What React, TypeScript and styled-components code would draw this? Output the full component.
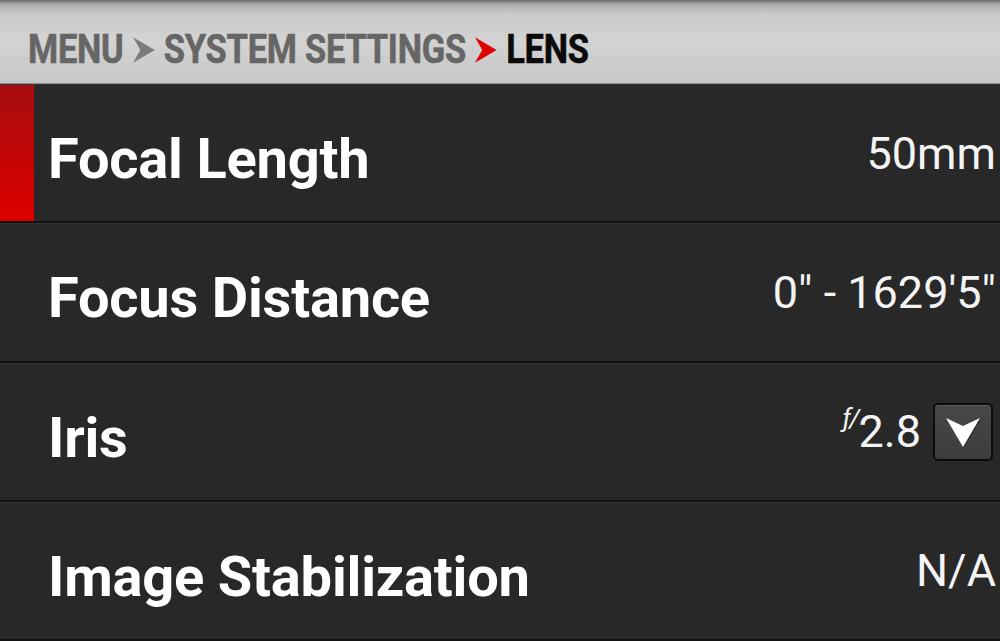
import React from "react";
import styled, { createGlobalStyle } from "styled-components";

const GlobalStyle = createGlobalStyle`
  html, body { margin: 0; padding: 0; background: #282828; }
  body { font-family: Roboto, "Noto Sans", "Liberation Sans", sans-serif; overflow: hidden; }
  * { box-sizing: border-box; }
`;

const Screen = styled.div`
  width: 1000px;
  height: 641px;
  display: flex;
  flex-direction: column;
  background: #282828;
`;

const Header = styled.header`
  height: 84px;
  flex: none;
  display: flex;
  align-items: center;
  padding: 16px 0 0 28px;
  background: linear-gradient(
    to bottom,
    #6a6a6a 0px,
    #a9a9a9 4px,
    #cbcbcb 14px,
    #d3d3d3 40px,
    #c7c7c7 100%
  );
  border-bottom: 1px solid #8a8a8a;
`;

const Crumbs = styled.nav`
  display: flex;
  align-items: center;
  gap: 11px;
  transform: scaleX(0.84);
  transform-origin: left center;
  white-space: nowrap;
`;

const Crumb = styled.span<{ $current?: boolean }>`
  font-size: 41px;
  font-weight: 700;
  line-height: 1;
  letter-spacing: -0.3px;
  color: ${(p) => (p.$current ? "#0a0a0a" : "#666666")};
  -webkit-text-stroke: 0.6px ${(p) => (p.$current ? "#0a0a0a" : "#666666")};
`;

const CrumbArrow = styled.svg`
  width: 26px;
  height: 30px;
  flex: none;
`;

const List = styled.main`
  flex: 1;
  display: flex;
  flex-direction: column;
`;

const Row = styled.div`
  flex: 1;
  display: flex;
  align-items: stretch;
  background: #282828;
  border-top: 1px solid #353535;
  border-bottom: 2px solid #121212;
  padding-right: 4px;
`;

const Indicator = styled.div<{ $on?: boolean }>`
  width: 34px;
  flex: none;
  background: ${(p) =>
    p.$on ? "linear-gradient(to bottom, #a50f10 0%, #c20505 50%, #de0000 100%)" : "transparent"};
`;

const Label = styled.div`
  flex: 1;
  display: flex;
  align-items: center;
  padding: 12px 0 0 14px;
  font-size: 56px;
  font-weight: 700;
  color: #ffffff;
  letter-spacing: -0.2px;
`;

const Value = styled.div`
  display: flex;
  align-items: center;
  gap: 12px;
  font-size: 45px;
  font-weight: 400;
  color: #f4f4f4;
  white-space: nowrap;
`;

const FNumber = styled.span`
  display: flex;
  align-items: flex-start;
`;

const FPrefix = styled.span`
  font-size: 26px;
  font-style: italic;
  margin-top: -2px;
  margin-right: 1px;
  letter-spacing: -2px;
`;

const DropButton = styled.div`
  width: 60px;
  height: 58px;
  border: 2px solid #0c0c0c;
  border-radius: 5px;
  background: linear-gradient(to bottom, #474747 0%, #3d3d3d 100%);
  box-shadow: inset 0 1px 0 #5a5a5a;
  display: flex;
  align-items: center;
  justify-content: center;
  margin-right: 3px;
`;

const Arrow = ({ color }: { color: string }) => (
  <CrumbArrow viewBox="0 0 24 28">
    <polygon points="0,2 24,14 0,26 8,14" fill={color} />
  </CrumbArrow>
);

const DownArrow = () => (
  <svg width="40" height="34" viewBox="0 0 40 34">
    <polygon points="3,3 20,11 37,3 20,32" fill="#1a1a1a" opacity="0.5" transform="translate(1,1)" />
    <polygon points="3,3 20,11 37,3 20,32" fill="#ffffff" />
  </svg>
);

export default function App() {
  return (
    <Screen>
      <GlobalStyle />
      <Header>
        <Crumbs>
          <Crumb>MENU</Crumb>
          <Arrow color="#7c7c7c" />
          <Crumb>SYSTEM SETTINGS</Crumb>
          <Arrow color="#e00000" />
          <Crumb $current>LENS</Crumb>
        </Crumbs>
      </Header>
      <List>
        <Row>
          <Indicator $on />
          <Label>Focal Length</Label>
          <Value>50mm</Value>
        </Row>
        <Row>
          <Indicator />
          <Label>Focus Distance</Label>
          <Value>0″ - 1629′5″</Value>
        </Row>
        <Row>
          <Indicator />
          <Label>Iris</Label>
          <Value>
            <FNumber>
              <FPrefix>ƒ/</FPrefix>2.8
            </FNumber>
            <DropButton>
              <DownArrow />
            </DropButton>
          </Value>
        </Row>
        <Row>
          <Indicator />
          <Label>Image Stabilization</Label>
          <Value>N/A</Value>
        </Row>
      </List>
    </Screen>
  );
}
